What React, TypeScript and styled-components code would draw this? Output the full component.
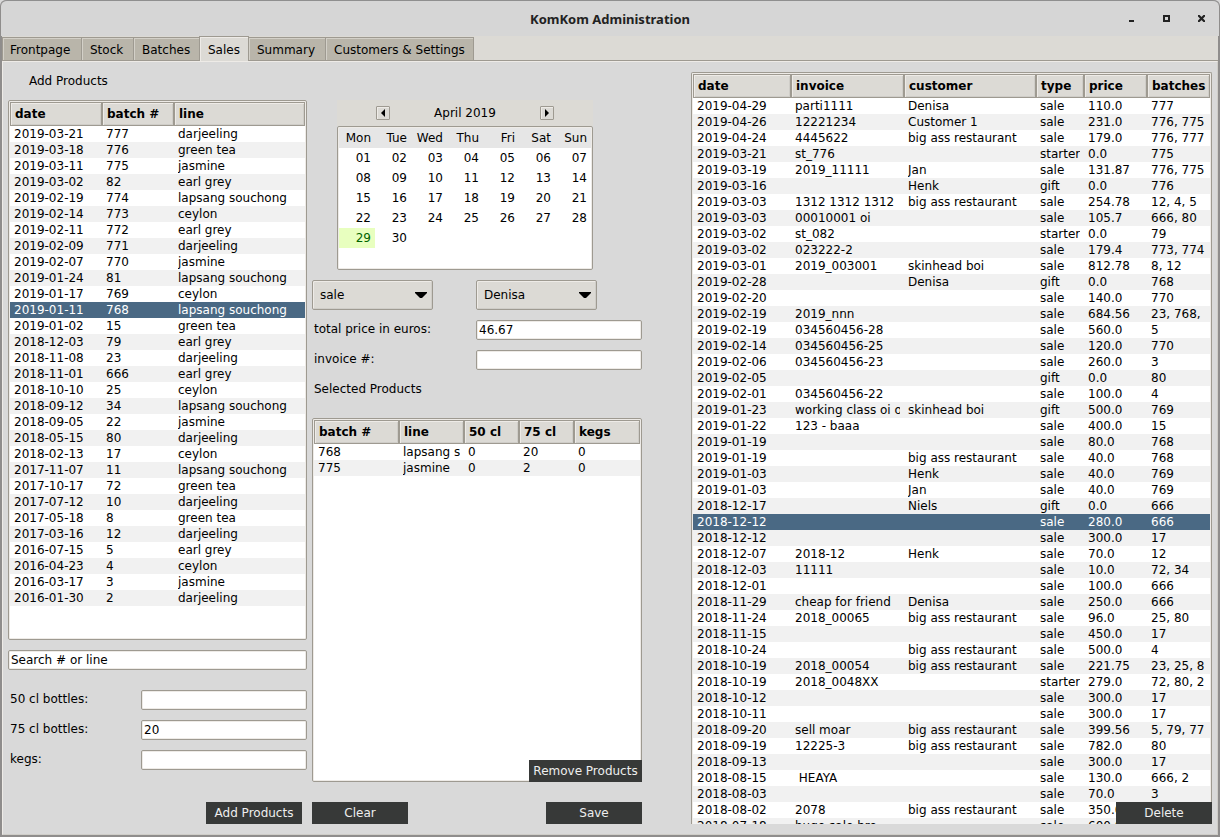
import React from "react";
import styled, { createGlobalStyle, css } from "styled-components";

const GlobalStyle = createGlobalStyle`
  *, *::before, *::after { box-sizing: border-box; }
  body { margin: 0; background: #d9d9d9; }
  body, button, input, select, table {
    font-family: "DejaVu Sans", sans-serif;
    font-size: 12px;
    line-height: 16px;
    color: #000;
  }
`;

const line = "#9e9a91";
const face = "#dcdad5";
const light = "#eeebe7";
const shade = "#cfcdc8";

const Window = styled.div`
  display: flex;
  flex-direction: column;
  height: 100vh;
  min-height: 640px;
  min-width: 1100px;
  padding: 0 2px 2px;
  overflow: hidden;
  background: #8f8d8c;
  border-radius: 6px 6px 0 0;
`;

const TitleBar = styled.header`
  display: grid;
  grid-template-columns: 1fr auto 1fr;
  align-items: center;
  flex: none;
  height: 36px;
  margin: 0 -1px;
  background: #d6d6d6;
  border-top: 1px solid #8f8f8f;
  border-radius: 6px 6px 0 0;
`;

const Title = styled.h1`
  grid-column: 2;
  margin: 0;
  font-family: "Noto Sans", sans-serif;
  font-size: 13px;
  line-height: 16px;
  color: #222;
`;

const WindowControls = styled.div`
  display: flex;
  justify-content: flex-end;
  gap: 20px;
  padding-right: 10px;
`;

const WindowButton = styled.button`
  display: flex;
  width: 15px;
  height: 15px;
  padding: 4px;
  border: 0;
  background: none;
`;

const TabBar = styled.nav`
  display: flex;
  align-items: flex-end;
  flex: none;
  height: 25px;
  background: ${face};
  border-bottom: 1px solid ${line};
`;

const Tab = styled.button<{ $width: number; $active?: boolean }>`
  width: ${(p) => p.$width}px;
  height: 23px;
  padding: 2px 0 0 8px;
  text-align: left;
  border: 1px solid ${line};
  border-width: 1px 1px 0 0;
  background: #b9b5aa;
  box-shadow: inset 1px 1px 0 #d3d0c8;
  white-space: nowrap;

  &:first-child { border-left-width: 1px; padding-left: 7px; }

  ${(p) => p.$active && css`
    height: 25px;
    margin: 0 0 -1px -1px;
    padding-bottom: 1px;
    border-left-width: 1px;
    background: ${face};
    box-shadow: inset 1px 1px 0 ${light};
    position: relative;
  `}
`;

const Page = styled.main`
  display: grid;
  grid-template-columns: 299px 330px minmax(0, 1fr);
  grid-template-rows: minmax(0, 1fr);
  column-gap: 5px;
  flex: 1;
  min-height: 0;
  padding: 0 5px 10px;
  background: #d9d9d9;
  border: 1px solid ${light};
  border-right-color: ${shade};
  border-bottom-color: ${shade};
`;

const Column = styled.section`
  display: flex;
  flex-direction: column;
  min-height: 0;
`;

const Heading = styled.h2<{ $indent?: boolean }>`
  height: 18px;
  margin: 0;
  padding-top: 1px;
  padding-left: ${(p) => (p.$indent ? 21 : 2)}px;
  font-size: 12px;
  font-weight: 400;
  line-height: 16px;
`;

const ProductColumn = styled(Column)`
  padding-top: 10px;
  gap: 10px;
`;

const SaleColumn = styled(Column)`
  padding-top: 38px;
`;

const HistoryColumn = styled(Column)`
  position: relative;
  margin-left: 44px;
  padding-top: 10px;
`;

const Frame = styled.div<{ $open?: boolean }>`
  flex: 1;
  min-height: 0;
  overflow: hidden;
  padding: 1px;
  background: #fff;
  border: 1px solid ${line};
  border-radius: 2px;
  box-shadow: inset 0 0 0 1px ${light};
  ${(p) => p.$open && css`border-bottom: 0; border-radius: 2px 2px 0 0; padding-bottom: 0;`}
`;

const Grid = styled.table`
  width: 100%;
  table-layout: fixed;
  border-collapse: separate;
  border-spacing: 0;
`;

const HeadCell = styled.th`
  height: 24px;
  padding: 0 3px 0 4px;
  text-align: left;
  font-weight: 700;
  white-space: nowrap;
  overflow: hidden;
  background: ${face};
  border: 1px solid ${line};
  box-shadow: inset 1px 1px 0 ${light}, inset -1px -1px 0 ${shade};
`;

const Row = styled.tr<{ $selected?: boolean }>`
  height: 16px;
  &:nth-child(even) { background: #f1f1f1; }
  ${(p) => p.$selected && css`
    && { background: #4a6984; color: #fff; }
  `}
`;

const Cell = styled.td`
  padding: 0 4px;
`;

const Clip = styled.span`
  display: block;
  height: 16px;
  overflow: hidden;
  white-space: pre;
`;

const Form = styled.div`
  display: grid;
  grid-template-columns: minmax(0, 1fr) 166px;
  row-gap: 10px;
  padding-top: 10px;
`;

const Label = styled.label`
  padding: 1px 2px;
  height: 20px;
`;

const Entry = styled.input`
  flex: none;
  width: 100%;
  height: 20px;
  padding: 0 2px;
  background: #fff;
  border: 1px solid ${line};
  border-radius: 2px;
  box-shadow: inset 0 0 0 1px ${light};
  outline: 0;
  &::placeholder { color: #000; opacity: 1; }
`;

const Button = styled.button<{ $wide?: boolean }>`
  flex: none;
  width: ${(p) => (p.$wide ? 113 : 96)}px;
  height: 22px;
  padding: 0;
  border: 0;
  background: #373938;
  color: #eee;
  white-space: nowrap;
`;

const ButtonRow = styled.div`
  display: flex;
  flex: none;
  justify-content: flex-end;
  padding: 22px 5px 0 0;
`;

const SplitRow = styled(ButtonRow)`
  justify-content: space-between;
  padding: 20px 0 0;
`;

const Corner = styled.div`
  position: absolute;
  right: 0;
  bottom: 0;
  display: flex;
`;

const Calendar = styled.div`
  flex: none;
  width: 256px;
  margin-left: 25px;
`;

const CalendarHead = styled.div`
  display: flex;
  align-items: center;
  justify-content: space-between;
  height: 26px;
  padding: 0 39px;
  background: ${face};
`;

const Arrow = styled.button`
  display: flex;
  align-items: center;
  justify-content: center;
  width: 14px;
  height: 14px;
  padding: 0;
  background: ${face};
  border: 1px solid ${line};
  border-radius: 1px;
  box-shadow: inset 1px 1px 0 ${light};
`;

const CalendarFrame = styled(Frame)`
  height: 144px;
`;

const Weekday = styled.th`
  height: 20px;
  padding: 0 4px 0 0;
  text-align: right;
  font-weight: 400;
  background: #e6e6e6;
`;

const Day = styled.td<{ $today?: boolean }>`
  height: 20px;
  padding: 0 4px 0 0;
  text-align: right;
  ${(p) => p.$today && css`background: #e8ffbf; color: #006400;`}
`;

const Choices = styled.div`
  display: grid;
  grid-template-columns: minmax(0, 1fr) 166px;
  flex: none;
  padding-top: 10px;
`;

const Choice = styled.div`
  display: grid;
  width: 121px;
  height: 30px;
  align-items: center;

  select, svg { grid-area: 1 / 1; }
  svg { justify-self: end; margin-right: 6px; pointer-events: none; }
`;

const Select = styled.select`
  appearance: none;
  width: 100%;
  height: 30px;
  padding: 0 7px;
  background: ${face};
  border: 1px solid ${line};
  border-radius: 2px;
  box-shadow: inset 1px 1px 0 ${light}, inset -1px -1px 0 ${shade};
`;

const SelectedBox = styled.div`
  position: relative;
  display: flex;
  flex: 1;
  min-height: 0;
  margin-top: 20px;
`;

type TableProps = { label: string; widths: (number | null)[]; heads: string[]; rows: string[][]; selected?: number };

function DataTable({ label, widths, heads, rows, selected }: TableProps) {
  return (
    <Grid aria-label={label}>
      <colgroup>
        {widths.map((w, i) => <col key={i} width={w ?? undefined} />)}
      </colgroup>
      <thead>
        <tr>{heads.map((h) => <HeadCell key={h} scope="col">{h}</HeadCell>)}</tr>
      </thead>
      <tbody>
        {rows.map((r, i) => (
          <Row key={i} $selected={i === selected}>
            {r.map((c, j) => <Cell key={j}><Clip>{c}</Clip></Cell>)}
          </Row>
        ))}
      </tbody>
    </Grid>
  );
}

function Dropdown({ label, value }: { label: string; value: string }) {
  return (
    <Choice>
      <Select aria-label={label} defaultValue={value}><option>{value}</option></Select>
      <svg width="12" height="6" viewBox="0 0 12 6" aria-hidden="true"><path d="M0 0h12v1L7 6H5L0 1z" /></svg>
    </Choice>
  );
}

const parse = (text: string) => text.trim().split("\n").map((l) => l.split("|"));

const batches = parse(`
2019-03-21|777|darjeeling
2019-03-18|776|green tea
2019-03-11|775|jasmine
2019-03-02|82|earl grey
2019-02-19|774|lapsang souchong
2019-02-14|773|ceylon
2019-02-11|772|earl grey
2019-02-09|771|darjeeling
2019-02-07|770|jasmine
2019-01-24|81|lapsang souchong
2019-01-17|769|ceylon
2019-01-11|768|lapsang souchong
2019-01-02|15|green tea
2018-12-03|79|earl grey
2018-11-08|23|darjeeling
2018-11-01|666|earl grey
2018-10-10|25|ceylon
2018-09-12|34|lapsang souchong
2018-09-05|22|jasmine
2018-05-15|80|darjeeling
2018-02-13|17|ceylon
2017-11-07|11|lapsang souchong
2017-10-17|72|green tea
2017-07-12|10|darjeeling
2017-05-18|8|green tea
2017-03-16|12|darjeeling
2016-07-15|5|earl grey
2016-04-23|4|ceylon
2016-03-17|3|jasmine
2016-01-30|2|darjeeling
`);

const sales = parse(`
2019-04-29|parti1111|Denisa|sale|110.0|777
2019-04-26|12221234|Customer 1|sale|231.0|776, 775
2019-04-24|4445622|big ass restaurant|sale|179.0|776, 777
2019-03-21|st_776||starter|0.0|775
2019-03-19|2019_11111|Jan|sale|131.87|776, 775
2019-03-16||Henk|gift|0.0|776
2019-03-03|1312 1312 1312|big ass restaurant|sale|254.78|12, 4, 5
2019-03-03|00010001 oi||sale|105.7|666, 80
2019-03-02|st_082||starter|0.0|79
2019-03-02|023222-2||sale|179.4|773, 774
2019-03-01|2019_003001|skinhead boi|sale|812.78|8, 12
2019-02-28||Denisa|gift|0.0|768
2019-02-20|||sale|140.0|770
2019-02-19|2019_nnn||sale|684.56|23, 768,
2019-02-19|034560456-28||sale|560.0|5
2019-02-14|034560456-25||sale|120.0|770
2019-02-06|034560456-23||sale|260.0|3
2019-02-05|||gift|0.0|80
2019-02-01|034560456-22||sale|100.0|4
2019-01-23|working class oi o|skinhead boi|gift|500.0|769
2019-01-22|123 - baaa||sale|400.0|15
2019-01-19|||sale|80.0|768
2019-01-19||big ass restaurant|sale|40.0|768
2019-01-03||Henk|sale|40.0|769
2019-01-03||Jan|sale|40.0|769
2018-12-17||Niels|gift|0.0|666
2018-12-12|||sale|280.0|666
2018-12-12|||sale|300.0|17
2018-12-07|2018-12|Henk|sale|70.0|12
2018-12-03|11111||sale|10.0|72, 34
2018-12-01|||sale|100.0|666
2018-11-29|cheap for friend|Denisa|sale|250.0|666
2018-11-24|2018_00065|big ass restaurant|sale|96.0|25, 80
2018-11-15|||sale|450.0|17
2018-10-24||big ass restaurant|sale|500.0|4
2018-10-19|2018_00054|big ass restaurant|sale|221.75|23, 25, 8
2018-10-19|2018_0048XX||starter|279.0|72, 80, 2
2018-10-12|||sale|300.0|17
2018-10-11|||sale|300.0|17
2018-09-20|sell moar|big ass restaurant|sale|399.56|5, 79, 77
2018-09-19|12225-3|big ass restaurant|sale|782.0|80
2018-09-13|||sale|300.0|17
2018-08-15| HEAYA||sale|130.0|666, 2
2018-08-03|||sale|70.0|3
2018-08-02|2078|big ass restaurant|sale|350.0|
2018-07-18|huge sale bro||sale|600.0|
`);

const chosen = parse(`
768|lapsang s|0|20|0
775|jasmine|0|2|0
`);

const tabs: [string, number][] = [
  ["Frontpage", 80],
  ["Stock", 52],
  ["Batches", 66],
  ["Sales", 50],
  ["Summary", 77],
  ["Customers & Settings", 148],
];
const weekdays = ["Mon", "Tue", "Wed", "Thu", "Fri", "Sat", "Sun"];
const weeks = [0, 1, 2, 3, 4].map((w) =>
  weekdays.map((_, d) => w * 7 + d + 1).map((n) => (n <= 30 ? String(n).padStart(2, "0") : "")),
);

export default function App() {
  return (
    <>
      <GlobalStyle />
      <Window>
        <TitleBar>
          <Title>KomKom Administration</Title>
          <WindowControls>
            <WindowButton aria-label="Minimize">
              <svg width="7" height="7" viewBox="0 0 7 7"><path d="M1 5h5v2H1z" fill="#222" /></svg>
            </WindowButton>
            <WindowButton aria-label="Maximize">
              <svg width="7" height="7" viewBox="0 0 7 7"><path d="M1 1h5v5H1z" fill="none" stroke="#222" strokeWidth="2" /></svg>
            </WindowButton>
            <WindowButton aria-label="Close">
              <svg width="7" height="7" viewBox="0 0 7 7"><path d="M0 0l7 7M7 0l-7 7" stroke="#222" strokeWidth="2.2" /></svg>
            </WindowButton>
          </WindowControls>
        </TitleBar>
        <TabBar aria-label="Sections">
          {tabs.map(([name, width]) => <Tab key={name} $width={width} $active={name === "Sales"}>{name}</Tab>)}
        </TabBar>
        <Page>
          <ProductColumn>
            <Heading $indent>Add Products</Heading>
            <Frame>
              <DataTable label="Batches in stock" widths={[92, 72, null]} heads={["date", "batch #", "line"]} rows={batches} selected={11} />
            </Frame>
            <Entry aria-label="Search batches" placeholder="Search # or line" />
            <Form>
              <Label htmlFor="b50">50 cl bottles:</Label>
              <Entry id="b50" />
              <Label htmlFor="b75">75 cl bottles:</Label>
              <Entry id="b75" defaultValue="20" />
              <Label htmlFor="kegs">kegs:</Label>
              <Entry id="kegs" />
            </Form>
            <ButtonRow><Button>Add Products</Button></ButtonRow>
          </ProductColumn>

          <SaleColumn>
            <Calendar>
              <CalendarHead>
                <Arrow aria-label="Previous month">
                  <svg width="4" height="8" viewBox="0 0 4 8"><path d="M4 0v8L0 4z" /></svg>
                </Arrow>
                April 2019
                <Arrow aria-label="Next month">
                  <svg width="4" height="8" viewBox="0 0 4 8"><path d="M0 0v8l4-4z" /></svg>
                </Arrow>
              </CalendarHead>
              <CalendarFrame>
                <Grid aria-label="April 2019">
                  <thead>
                    <tr>{weekdays.map((d) => <Weekday key={d} scope="col">{d}</Weekday>)}</tr>
                  </thead>
                  <tbody>
                    {weeks.map((w, i) => (
                      <tr key={i}>{w.map((d, j) => <Day key={j} $today={d === "29"}>{d}</Day>)}</tr>
                    ))}
                  </tbody>
                </Grid>
              </CalendarFrame>
            </Calendar>
            <Choices>
              <Dropdown label="Sale type" value="sale" />
              <Dropdown label="Customer" value="Denisa" />
            </Choices>
            <Form>
              <Label htmlFor="price">total price in euros:</Label>
              <Entry id="price" defaultValue="46.67" />
              <Label htmlFor="invoice">invoice #:</Label>
              <Entry id="invoice" />
              <Heading>Selected Products</Heading>
            </Form>
            <SelectedBox>
              <Frame>
                <DataTable label="Selected products" widths={[85, 65, 55, 55, null]} heads={["batch #", "line", "50 cl", "75 cl", "kegs"]} rows={chosen} />
              </Frame>
              <Corner><Button $wide>Remove Products</Button></Corner>
            </SelectedBox>
            <SplitRow>
              <Button>Clear</Button>
              <Button>Save</Button>
            </SplitRow>
          </SaleColumn>

          <HistoryColumn>
            <Frame $open>
              <DataTable
                label="Sales"
                widths={[98, 113, null, 48, 63, 63]}
                heads={["date", "invoice", "customer", "type", "price", "batches"]}
                rows={sales}
                selected={26}
              />
            </Frame>
            <Corner><Button>Delete</Button></Corner>
          </HistoryColumn>
        </Page>
      </Window>
    </>
  );
}
